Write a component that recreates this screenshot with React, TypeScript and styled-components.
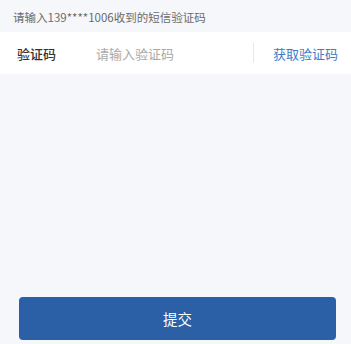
import React from "react";
import styled, { createGlobalStyle } from "styled-components";

const Global = createGlobalStyle`
  html, body { margin: 0; padding: 0; }
  body {
    background: #f6f7fb;
    font-family: "Noto Sans CJK SC", "Noto Sans", Roboto, sans-serif;
  }
  #root { height: 344px; }
`;

const Page = styled.div`
  height: 344px;
  display: flex;
  flex-direction: column;
  background: #f6f7fb;
  box-sizing: border-box;
`;

const Hint = styled.div`
  height: 32px;
  display: flex;
  align-items: center;
  padding-left: 13px;
  padding-top: 1px;
  box-sizing: border-box;
  font-size: 11.5px;
  color: #6b6b6b;
`;

const Row = styled.div`
  height: 42px;
  background: #ffffff;
  display: flex;
  align-items: center;
  padding: 0 13px 0 17px;
`;

const Label = styled.span`
  width: 79px;
  font-size: 13px;
  font-weight: 500;
  color: #333333;
`;

const Input = styled.input`
  flex: 1;
  min-width: 0;
  border: none;
  outline: none;
  background: transparent;
  padding: 0;
  font-family: inherit;
  font-size: 13px;
  color: #333;
  &::placeholder { color: #a9a9a9; }
`;

const Divider = styled.span`
  width: 1px;
  height: 20px;
  background: #e6e6e6;
  margin-right: 19px;
`;

const CodeButton = styled.span`
  font-size: 13px;
  color: #3d7cc9;
`;

const Spacer = styled.div`
  flex: 1;
`;

const Submit = styled.button`
  margin: 0 15px 4px 19px;
  height: 43px;
  border: none;
  border-radius: 4px;
  background: #2b5fa6;
  color: #ffffff;
  font-family: inherit;
  font-size: 14.5px;
`;

export default function App() {
  return (
    <>
      <Global />
      <Page>
        <Hint>请输入139****1006收到的短信验证码</Hint>
        <Row>
          <Label>验证码</Label>
          <Input placeholder="请输入验证码" />
          <Divider />
          <CodeButton>获取验证码</CodeButton>
        </Row>
        <Spacer />
        <Submit>提交</Submit>
      </Page>
    </>
  );
}
